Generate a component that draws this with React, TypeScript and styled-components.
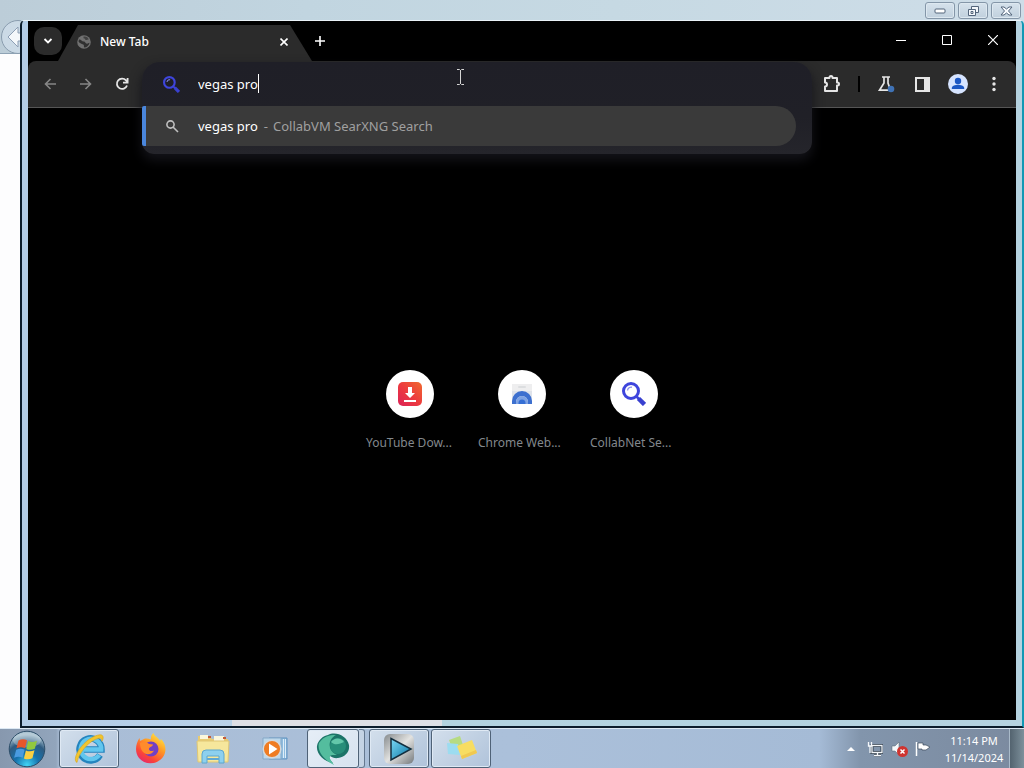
import React from 'react';
import styled, { createGlobalStyle, css } from 'styled-components';

const GlobalStyle = createGlobalStyle`
  *, *::before, *::after { box-sizing: border-box; }
  html, body { margin: 0; height: 100%; overflow: hidden; }
  body { font-family: 'Noto Sans', 'Open Sans', sans-serif; font-size: 13px; background: #fff; }
  #root { height: 100%; }
  button { border: 0; padding: 0; background: none; color: inherit; font: inherit; }
  svg { display: block; flex: none; }
`;

const Screen = styled.div`
  display: grid;
  grid-template-rows: minmax(0, 1fr) 40px;
  height: 100vh;
`;

const Desktop = styled.main`
  position: relative;
  background: #fdfdfe;
  overflow: hidden;
`;

/* Window behind */
const BackTitle = styled.header`
  display: flex;
  justify-content: flex-end;
  gap: 3px;
  height: 54px;
  padding: 2px 3px 0 0;
  border-bottom: 1px solid #8ea3b5;
  background: linear-gradient(90deg, #bccdd8 0, #c1d5e0 30%, #c6d9e3 60%, #cedde8 100%);
`;

const AeroButton = styled.button`
  display: grid;
  place-items: center;
  width: 30px;
  height: 17px;
  border: 1px solid #8496a8;
  border-radius: 3px;
  background: linear-gradient(#d6e2ec, #c0d0dd);
  box-shadow: inset 0 0 0 1px #dde8f0;
`;

const BackArrow = styled.svg`
  position: absolute;
  left: 0;
  top: 18px;
`;

/* Browser window */
const Frame = styled.section`
  position: absolute;
  inset: 20px 0 0 20px;
  display: flex;
  padding: 0 6px 6px 6px;
  border: solid #0c1c2b;
  border-width: 1px 2px 2px 2px;
  border-top-color: #eaf3f8;
  border-right-color: #1098b4;
  border-radius: 5px 5px 0 0;
  background: linear-gradient(90deg, #b3cce6 0, #b8d1e8 21%, #dedfe5 21%, #dedfe5 42%, #b3d3e0 42%, #b5d2e0 100%);
`;

const Browser = styled.div`
  flex: 1;
  min-width: 0;
  display: flex;
  flex-direction: column;
  background: #000;
  color: #fff;
`;

const TabStrip = styled.div`
  display: flex;
  height: 40px;
  padding-left: 6px;
`;

const TabSearch = styled.button`
  display: grid;
  place-items: center;
  width: 28px;
  height: 28px;
  margin-top: 6px;
  border-radius: 10px;
  background: #2b2b2b;
`;

const Tab = styled.div`
  display: flex;
  align-items: center;
  width: 254px;
  height: 36px;
  margin: 4px 0 0 -4px;
  padding: 0 20px 3px 19px;
  background: #2b2b2b;
  clip-path: polygon(20px 0, 232px 0, 254px 100%, 0 100%);
`;

const TabTitle = styled.span`
  flex: 1;
  margin-left: 9px;
  font-size: 12px;
  font-weight: 500;
  line-height: 16px;
`;

const TabButton = styled.button`
  display: grid;
  place-items: center;
  width: 16px;
  height: 16px;
`;

const NewTab = styled(TabButton)`
  margin: 12px auto 0 0;
`;

const CaptionButton = styled.button`
  display: grid;
  place-items: center;
  width: 46px;
  height: 38px;
`;

const Toolbar = styled.div`
  display: flex;
  height: 47px;
  padding: 1px 4px 0;
  border-bottom: 1px solid #565656;
  border-radius: 8px 8px 0 0;
  background: #2b2b2b;
`;

const ToolButton = styled.button<{ $dim?: boolean }>`
  display: grid;
  place-items: center;
  width: 36px;
  height: 44px;
  color: ${p => (p.$dim ? '#868686' : '#e6e6e6')};
`;

const Separator = styled.div`
  width: 2px;
  height: 16px;
  margin: 14px 8px 0;
  background: #000;
`;

const Omnibox = styled.div`
  position: relative;
  flex: 1;
  margin: 0 2px;
`;

const Popup = styled.div`
  position: absolute;
  inset: 0 0 auto 0;
  padding-bottom: 8px;
  border-radius: 18px 18px 12px 12px;
  background: linear-gradient(#1f1f27 0, #202027 60%, #25252b 100%);
  box-shadow: 0 6px 12px #14141a;
`;

const Row = styled.div`
  display: flex;
  align-items: center;
  height: 44px;
  padding-left: 21px;
  line-height: 18px;
`;

const Address = styled.input`
  field-sizing: content;
  margin-left: 18px;
  padding: 0;
  border: 0;
  outline: 0;
  background: none;
  color: #fff;
  font: inherit;
  line-height: 18px;
`;

const Caret = styled.span`
  width: 1px;
  height: 19px;
  margin-top: -2px;
  background: #fff;
`;

const Suggestion = styled.button`
  display: flex;
  align-items: center;
  width: calc(100% - 16px);
  height: 40px;
  padding-left: 17px;
  border-left: 4px solid #4a86dc;
  border-radius: 2px 20px 20px 2px;
  background: #3a3a3a;
  line-height: 18px;
  text-align: left;
`;

const Query = styled.span`
  margin-left: 18px;
`;

const Provider = styled.span`
  display: flex;
  gap: 5px;
  margin-left: 6px;
  color: #a0a0a0;
`;

const Page = styled.div`
  flex: 1;
  display: flex;
  align-items: center;
  justify-content: center;
  padding-bottom: 5px;
`;

const Shortcut = styled.a`
  display: flex;
  flex-direction: column;
  align-items: center;
  gap: 15px;
  width: 112px;
  color: #83888d;
  text-decoration: none;
`;

const Disc = styled.span`
  display: grid;
  place-items: center;
  width: 48px;
  height: 48px;
  border-radius: 50%;
  background: #fff;
`;

const ShortcutLabel = styled.span`
  width: 88px;
  font-size: 12px;
  line-height: 20px;
  white-space: nowrap;
`;

const Pointer = styled.svg`
  position: absolute;
  left: 456px;
  top: 69px;
`;

/* Taskbar */
const Taskbar = styled.footer`
  display: flex;
  align-items: stretch;
  padding-left: 4px;
  border-top: 1px solid #dce8f3;
  background: linear-gradient(90deg, #8798ae 0, #92a5bc 56px, #a9bdd6 60px, #abc0da 50%, #a5bbd6 80%, #8295ac 84%, #7b8a9f 100%);
`;

const StartButton = styled.button`
  display: grid;
  place-items: center;
  width: 46px;
  margin-right: 9px;
`;

const TaskButton = styled.button<{ $state?: 'open' | 'active'; $width?: number }>`
  display: grid;
  place-items: center;
  width: ${p => p.$width ?? 60}px;
  margin-right: 2px;
  ${p =>
    p.$state &&
    css`
      border: 1px solid #4f6277;
      border-radius: 3px;
      box-shadow: inset 0 0 0 1px #dfe9f4;
      background: ${p.$state === 'active'
        ? 'linear-gradient(135deg, #e6eef7, #d6e2ef)'
        : 'linear-gradient(135deg, #d3dfec, #b0c3da)'};
    `}
`;

const StackEdge = styled.span`
  width: 6px;
  margin: 0 4px 0 -2px;
  border: solid #64788f;
  border-width: 1px 1px 1px 0;
  border-radius: 0 3px 3px 0;
  background: #c4d3e4;
`;

const Tray = styled.div`
  display: flex;
  align-items: center;
  gap: 8px;
  margin-left: auto;
  color: #fff;
`;

const TrayButton = styled.button`
  display: grid;
  place-items: center;
  width: 16px;
  height: 20px;
`;

const Clock = styled.time`
  width: 70px;
  margin-right: -8px;
  color: #fff;
  font-size: 11px;
  line-height: 17px;
  text-align: center;
`;

const ShowDesktop = styled.button`
  align-self: stretch;
  width: 15px;
  border-left: 1px solid #a9bac9;
  background: linear-gradient(90deg, #53636f, #7d909b);
`;

const Globe = () => (
  <svg width="14" height="14" viewBox="0 0 14 14">
    <circle cx="7" cy="7" r="6.8" fill="#707070" />
    <path d="M2 4.5C4 4 4.8 6.8 6.8 6.6 8.5 6.5 8 8.6 10 8.7c1 .1 1.3-.9 2.6-1-.5 2.6-2.6 4.8-5.4 4.8-.7-1.3.3-2.4-1-3.1C4.7 8.7 2 7.8 1.5 6.4z" fill="#303030" />
    <path d="M6.5 1.6c2.8-.6 4.4.9 5.3 2.8-1.3-.2-1.6 1-3 .6-.8-.3-.4-1.500-2.3-1.8z" fill="#414141" />
  </svg>
);

const Lens = ({ size }: { size: number }) => (
  <svg width={size} height={size} viewBox="0 0 24 24" fill="none">
    <circle cx="9" cy="9" r="7.5" stroke="#3e45dc" strokeWidth="3" />
    <path d="M5.5 8.5A4 4 0 0 1 10 5.2" stroke="#8b90ec" strokeWidth="1.4" />
    <path d="M14.5 14.5l2.5 2.5" stroke="#3e45dc" strokeWidth="2.5" />
    <path d="M16.5 16.5l6 6" stroke="#3940cf" strokeWidth="4.5" />
  </svg>
);

const StartOrb = () => (
  <svg width="38" height="38" viewBox="0 0 38 38">
    <defs>
      <radialGradient id="orb" cx="50%" cy="95%" r="85%">
        <stop offset="0" stopColor="#40d5f5" />
        <stop offset=".4" stopColor="#1672ad" />
        <stop offset=".75" stopColor="#2f5b80" />
        <stop offset="1" stopColor="#a3bdcc" />
      </radialGradient>
    </defs>
    <circle cx="19" cy="19" r="17.8" fill="url(#orb)" stroke="#2c4d68" />
    <ellipse cx="19" cy="10" rx="14" ry="7.5" fill="#d6e5ec" opacity=".35" />
    <path d="M10.500 10.500q4.500-2.500 8.500-.2l-2 8q-4-2.200-8.500 0z" fill="#e7562a" />
    <path d="M20.200 11q4 2 8.800-.3l-2.200 8q-4.500 2.200-8.500.2z" fill="#91c83f" />
    <path d="M8.200 19.800q4.400-2.300 8.400 0l-2 8q-4-2.300-8.500 0z" fill="#4a9be0" />
    <path d="M17.900 20.400q4 2 8.600-.2l-2.100 8q-4.500 2.200-8.500.2z" fill="#fbcf42" />
  </svg>
);

const ExplorerE = () => (
  <svg width="34" height="34" viewBox="0 0 34 34" fill="none">
    <path d="M28 23a11 11 0 1 1 1.500-5.500H11.500" stroke="#2484be" strokeWidth="6.500" />
    <path d="M27.200 23a10.200 10.200 0 1 1 2-5.500H11.500" stroke="#61c6ee" strokeWidth="4.500" />
    <path d="M5 30.500C-.5 28 8 12 20 5.500 25 2.800 30 1.500 31 4.500c.6 2-.6 4-1.200 4.800.3-2-.3-3.600-3-3C18 8 7 20 5 30.500z" fill="#f1c52e" stroke="#d8a31e" strokeWidth=".6" />
  </svg>
);

const Firefox = () => (
  <svg width="32" height="34" viewBox="0 0 32 34">
    <defs>
      <linearGradient id="fox" x1=".85" y1="0" x2=".2" y2="1">
        <stop offset="0" stopColor="#fff04a" />
        <stop offset=".4" stopColor="#ff9a25" />
        <stop offset=".75" stopColor="#fb4538" />
        <stop offset="1" stopColor="#e32474" />
      </linearGradient>
    </defs>
    <path d="M18.500 1c1 3.500 5 4.500 6.500 8l1-2c5 5 6 12 2 18-6 8-18 8.500-24 1C-.5 20 .5 12 4.500 6L5 9l5-2.500c2-.2 4 0 6 1C15.500 5 16.500 2.500 18.500 1z" fill="url(#fox)" />
    <circle cx="16" cy="17" r="7.500" fill="#7240c4" />
    <path d="M5 11c4-2 7-1 9 1l4 .5c-.2 2-3.500 2.500-4 4-.6 2 2 3.500 5 2-1 3-5 4.500-8 3.500-4-1.500-6-6-6-11z" fill="#ff8b2c" />
  </svg>
);

const Folder = () => (
  <svg width="34" height="30" viewBox="0 0 34 30">
    <path d="M2 2h12l2 3h16v22H2z" fill="#e9cb72" />
    <path d="M4 1h8v4H4zM18 2h10v5H18z" fill="#fbf7dc" />
    <path d="M12 3h3M27 4h3" stroke="#c55b38" strokeWidth="2" />
    <path d="M1 7h32l-1 21H2z" fill="#f6e79c" stroke="#dfc774" />
    <path d="M6 29V20q0-4 4-4h14q4 0 4 4v9h-5v-7H11v7z" fill="#8dd0ee" stroke="#5da6ce" />
    <path d="M11 25h12" stroke="#60a8d3" strokeWidth="2" />
  </svg>
);

const MediaPlayer = () => (
  <svg width="28" height="28" viewBox="0 0 28 28">
    <path d="M8 3h18v21H8z" fill="#8fbcdf" stroke="#6093c0" />
    <path d="M22.500 4v19M24.500 4v19" stroke="#ddedf8" />
    <path d="M2 3h18v21H2z" fill="#bcd8ec" stroke="#85a9c8" />
    <circle cx="11" cy="14" r="8.800" fill="#ef7c22" stroke="#d5d9dc" strokeWidth="1.500" />
    <path d="M8 8.500l8.500 5.500L8 19.500z" fill="#fff" />
  </svg>
);

const GreenBubble = () => (
  <svg width="34" height="34" viewBox="0 0 34 34">
    <path d="M12 3C20-1 31 4 33 13c1 7-4 12-11 13-3 .5-6-.5-8-2-2 1 0 4 3 7C8 30 0 22 1 14 2 8 7 4 12 3z" fill="#1c7468" />
    <path d="M3 11c5-7 10-8 17-8-6 3-8 10-5 15 2 3 4 4 6 5-6 0-8 0-7 4l4 6C6 27 1 18 3 11z" fill="#54bd9e" />
    <circle cx="22" cy="14" r="8" fill="#278e79" />
    <path d="M15 10c3-4 9-5 13 0-4 2-9 4-13 0z" fill="#63c7aa" />
  </svg>
);

const VegasPlay = () => (
  <svg width="32" height="32" viewBox="0 0 32 32">
    <defs>
      <linearGradient id="steel" x2="1" y2="1">
        <stop offset="0" stopColor="#858a8d" />
        <stop offset=".5" stopColor="#e2e2e0" />
        <stop offset="1" stopColor="#74797c" />
      </linearGradient>
      <linearGradient id="play" x2="1" y2="1">
        <stop offset="0" stopColor="#7cdaf5" />
        <stop offset="1" stopColor="#0873a3" />
      </linearGradient>
    </defs>
    <rect x="1" y="1" width="30" height="30" rx="6" fill="url(#steel)" />
    <path d="M8 5.500L28 16 8 27z" fill="url(#play)" stroke="#132f3f" strokeWidth="1.500" />
  </svg>
);

const StickyNotes = () => (
  <svg width="34" height="30" viewBox="0 0 34 30">
    <path d="M5 6l11-4 4 12-11 3z" fill="#b6db82" />
    <path d="M3 9l11 1 2 11-12-1z" fill="#9cdcf0" />
    <path d="M13 12l15-6 5 13-15 6z" fill="#f7dd62" />
    <path d="M17 22l15-6 1 3-15 6z" fill="#f0c851" />
  </svg>
);

const Puzzle = () => (
  <svg width="20" height="20" viewBox="0 0 20 20" fill="none" stroke="currentColor" strokeWidth="2">
    <path d="M3 4h4.500V3.500a1.500 1.500 0 0 1 3 0V4H15v4.500h.5a1.500 1.500 0 0 1 0 3H15V17H3v-4.500a2 2 0 0 0 0-4z" strokeLinejoin="round" />
  </svg>
);

const shortcuts = [
  {
    label: 'YouTube Dow...',
    icon: (
      <svg width="24" height="24" viewBox="0 0 24 24">
        <defs>
          <linearGradient id="dl" x1="1" y1="0" x2="0" y2="1">
            <stop offset="0" stopColor="#f06a2e" />
            <stop offset=".5" stopColor="#ed3b3e" />
            <stop offset="1" stopColor="#dc2358" />
          </linearGradient>
        </defs>
        <rect width="24" height="24" rx="5" fill="url(#dl)" />
        <path d="M10 5h4v6h3l-5 5-5-5h3zM6 18h12v2H6z" fill="#fff" />
      </svg>
    ),
  },
  {
    label: 'Chrome Web...',
    icon: (
      <svg width="22" height="22" viewBox="0 0 22 22">
        <path d="M1 1h20v20H1z" fill="#dfe3ea" />
        <path d="M1 1h20v7H1z" fill="#eeeeef" />
        <rect x="7" y="3" width="8" height="2" rx="1" fill="#dcdee0" />
        <path d="M1 21v-3a10 10 0 0 1 20 0v3h-4v-2a6 6 0 0 0-12 0v2z" fill="#3d70cf" />
        <path d="M5 21v-2a6 6 0 0 1 12 0v2z" fill="#7ea3e4" />
        <path d="M7.500 21v-1a3.500 3.500 0 0 1 7 0v1z" fill="#356fd5" />
      </svg>
    ),
  },
  { label: 'CollabNet Se...', icon: <Lens size={24} /> },
];

export default function App() {
  return (
    <Screen>
      <GlobalStyle />
      <Desktop>
        <BackTitle>
          <AeroButton aria-label="Minimize">
            <svg width="12" height="6"><rect x="1" y="1" width="10" height="4" rx="1" fill="#fff" stroke="#53657b" /></svg>
          </AeroButton>
          <AeroButton aria-label="Restore">
            <svg width="13" height="12" fill="#f3f7fb" stroke="#53657b"><path d="M4.500 1.500h7v6h-7z" /><path d="M1.500 4.500h7v6h-7zM4 6.500h2v2H4z" /></svg>
          </AeroButton>
          <AeroButton aria-label="Close">
            <svg width="13" height="10"><path d="M1 1h3l2.500 2L9 1h3L8.500 5 12 9H9L6.500 7 4 9H1l3.500-4z" fill="#f8fbff" stroke="#53657b" /></svg>
          </AeroButton>
        </BackTitle>
        <BackArrow width="21" height="36" fill="none">
          <circle cx="18" cy="19" r="16.500" fill="#cbdae6" stroke="#899cae" />
          <path d="M8 19L18 9v6h4v8h-4v6z" fill="#f4f8fb" stroke="#8d9fb5" />
        </BackArrow>

        <Frame>
          <Browser>
            <TabStrip>
              <TabSearch aria-label="Search tabs">
                <svg width="10" height="6" fill="none" stroke="#fff" strokeWidth="1.800"><path d="M1.500 1L5 4.500 8.500 1" /></svg>
              </TabSearch>
              <Tab>
                <Globe />
                <TabTitle>New Tab</TabTitle>
                <TabButton aria-label="Close tab">
                  <svg width="8" height="8" stroke="#fff" strokeWidth="1.600"><path d="M.5.5l7 7m0-7l-7 7" /></svg>
                </TabButton>
              </Tab>
              <NewTab aria-label="New tab">
                <svg width="10" height="10" stroke="#fff" strokeWidth="1.600"><path d="M5 0v10M0 5h10" /></svg>
              </NewTab>
              <CaptionButton aria-label="Minimize window">
                <svg width="10" height="10" stroke="#fff"><path d="M0 5.500h10" /></svg>
              </CaptionButton>
              <CaptionButton aria-label="Maximize window">
                <svg width="10" height="10" fill="none" stroke="#fff"><path d="M.5.5h9v9h-9z" /></svg>
              </CaptionButton>
              <CaptionButton aria-label="Close window">
                <svg width="10" height="10" stroke="#fff" strokeWidth="1.200"><path d="M0 0l10 10m0-10L0 10" /></svg>
              </CaptionButton>
            </TabStrip>

            <Toolbar>
              <ToolButton $dim aria-label="Back">
                <svg width="12" height="12" fill="none" stroke="currentColor" strokeWidth="1.600"><path d="M12 6H1.500M6.500 1l-5 5 5 5" /></svg>
              </ToolButton>
              <ToolButton $dim aria-label="Forward">
                <svg width="12" height="12" fill="none" stroke="currentColor" strokeWidth="1.600"><path d="M0 6h10.500M5.500 1l5 5-5 5" /></svg>
              </ToolButton>
              <ToolButton aria-label="Reload">
                <svg width="14" height="14" fill="none" stroke="currentColor" strokeWidth="1.800"><path d="M12 8.500A5.200 5.200 0 1 1 11 3.300l1 1.200M12.600 1v4.600H8" /></svg>
              </ToolButton>
              <Omnibox>
                <Popup>
                  <Row>
                    <Lens size={17} />
                    <Address aria-label="Address and search bar" defaultValue="vegas pro" />
                    <Caret />
                  </Row>
                  <Suggestion>
                    <svg width="17" height="14" fill="none" stroke="#c0c0c0" strokeWidth="1.600"><circle cx="7.500" cy="5.500" r="3.600" /><path d="M10 8l5 5" /></svg>
                    <Query>vegas pro</Query>
                    <Provider><span>-</span><span>CollabVM SearXNG Search</span></Provider>
                  </Suggestion>
                </Popup>
              </Omnibox>
              <ToolButton aria-label="Extensions"><Puzzle /></ToolButton>
              <Separator />
              <ToolButton aria-label="Labs">
                <svg width="18" height="18" fill="none" stroke="currentColor" strokeWidth="1.700"><path d="M5 2h8M7 2v6l-4.500 7.200h11L11 8V2" /><circle cx="14" cy="14" r="3.300" fill="#3f72b5" stroke="none" /></svg>
              </ToolButton>
              <ToolButton aria-label="Side panel">
                <svg width="15" height="15"><path d="M1 1h13v13H1z" fill="none" stroke="currentColor" strokeWidth="2" /><path d="M9 1h5v13H9z" fill="currentColor" /></svg>
              </ToolButton>
              <ToolButton aria-label="Profile">
                <svg width="20" height="20"><circle cx="10" cy="10" r="10" fill="#d6e4ff" /><circle cx="10" cy="7" r="3.200" fill="#1b57c4" /><path d="M3.800 15v-1c0-2.500 3.700-3.300 6.200-3.300s6.200.8 6.200 3.300v1z" fill="#1b57c4" /></svg>
              </ToolButton>
              <ToolButton aria-label="Menu">
                <svg width="4" height="16" fill="currentColor"><circle cx="2" cy="2.500" r="1.700" /><circle cx="2" cy="8" r="1.700" /><circle cx="2" cy="13.500" r="1.700" /></svg>
              </ToolButton>
            </Toolbar>

            <Page>
              {shortcuts.map(s => (
                <Shortcut key={s.label} href="#">
                  <Disc>{s.icon}</Disc>
                  <ShortcutLabel>{s.label}</ShortcutLabel>
                </Shortcut>
              ))}
            </Page>
          </Browser>
        </Frame>
        <Pointer width="9" height="16" fill="none" stroke="#d5d5d5"><path d="M1 .5h2.500l1 1 1-1H8M4.500 1v14M1 15.500h2.500l1-1 1 1H8" /></Pointer>
      </Desktop>

      <Taskbar>
        <StartButton aria-label="Start"><StartOrb /></StartButton>
        <TaskButton $state="open" aria-label="Internet Explorer"><ExplorerE /></TaskButton>
        <TaskButton aria-label="Firefox"><Firefox /></TaskButton>
        <TaskButton aria-label="File Explorer"><Folder /></TaskButton>
        <TaskButton aria-label="Media Player"><MediaPlayer /></TaskButton>
        <TaskButton $state="active" $width={52} aria-label="Browser"><GreenBubble /></TaskButton>
        <StackEdge />
        <TaskButton $state="open" aria-label="Video editor"><VegasPlay /></TaskButton>
        <TaskButton $state="open" aria-label="Sticky Notes"><StickyNotes /></TaskButton>
        <Tray>
          <TrayButton aria-label="Show hidden icons">
            <svg width="8" height="4"><path d="M0 4l4-4 4 4z" fill="#fff" /></svg>
          </TrayButton>
          <TrayButton aria-label="Network">
            <svg width="16" height="16" fill="none"><path d="M5 4.500h10v7H5zM7 14h7M10.500 12v2" stroke="#2b3846" strokeWidth="3" /><path d="M5 4.500h10v7H5zM7 14.500h7M10.500 12v2M1.500 1v4h3V1M3 5v7" stroke="#f4f7fa" strokeWidth="1.300" /></svg>
          </TrayButton>
          <TrayButton aria-label="Volume muted">
            <svg width="18" height="18"><path d="M1 6h3l4-4v13l-4-4H1z" fill="#f4f7fa" stroke="#53616f" strokeWidth=".5" /><circle cx="11.500" cy="11.500" r="5.500" fill="#cf3430" /><path d="M9.500 9.500l4 4m0-4l-4 4" stroke="#fff" strokeWidth="1.500" /></svg>
          </TrayButton>
          <TrayButton aria-label="Action Center">
            <svg width="16" height="16"><path d="M1.500 1v14" stroke="#fff" strokeWidth="1.500" /><path d="M3 2h5v2h3l4 2-4 3H7V8H3z" fill="#fff" stroke="#3e4c5b" strokeWidth=".7" /></svg>
          </TrayButton>
          <Clock>11:14 PM<br />11/14/2024</Clock>
          <ShowDesktop aria-label="Show desktop" />
        </Tray>
      </Taskbar>
    </Screen>
  );
}
